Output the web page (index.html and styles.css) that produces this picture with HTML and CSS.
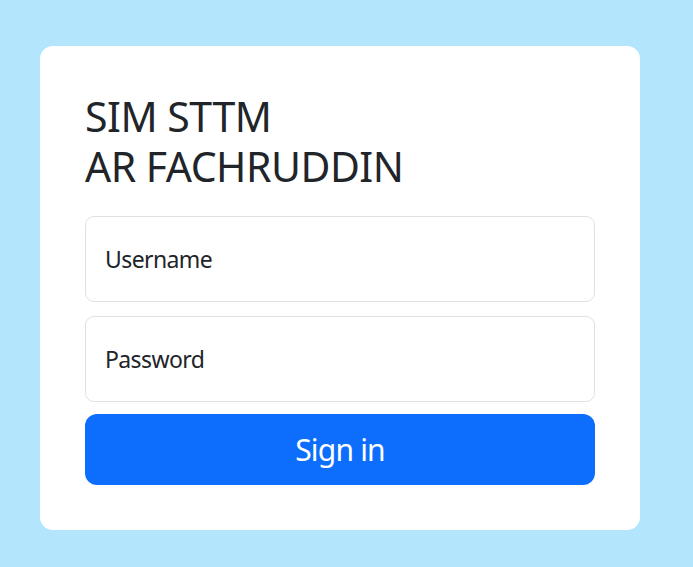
FILE: index.html
```html
<!DOCTYPE html>
<html lang="id">
<head>
<meta charset="utf-8">
<title>SIM STTM AR FACHRUDDIN</title>
<link rel="stylesheet" href="styles.css">
</head>
<body>
<main class="page">
  <form class="card">
    <h1 class="title">SIM STTM<br>AR FACHRUDDIN</h1>
    <div class="fields">
      <input class="field" type="text" placeholder="Username">
      <input class="field" type="password" placeholder="Password">
      <button class="btn" type="button">Sign in</button>
    </div>
  </form>
</main>
</body>
</html>
```

FILE: styles.css
```css
* { box-sizing: border-box; }
html, body { margin: 0; height: 100%; }
body {
  background: #b3e5fc;
  font-family: "Noto Sans", "Open Sans", sans-serif;
  color: #212529;
}
.page {
  padding: 46px 53px 37px 40px;
}
.card {
  width: 600px;
  background: #fff;
  border-radius: 13px;
  padding: 45px 45px 45px 45px;
}
.title {
  margin: 0 0 25px 0;
  font-weight: 400;
  font-size: 41px;
  line-height: 50px;
  letter-spacing: -0.5px;
}
.fields {
  display: flex;
  flex-direction: column;
  gap: 14px;
}
.field {
  height: 86px;
  width: 100%;
  border: 1px solid #dee2e6;
  border-radius: 9px;
  padding: 0 19px;
  font-family: inherit;
  font-size: 23px;
  letter-spacing: -0.6px;
  color: #212529;
  background: #fff;
  outline: none;
}
.field::placeholder { color: #212529; opacity: 1; }
.btn {
  height: 71px;
  width: 100%;
  border: none;
  border-radius: 12px;
  background: #0d6efd;
  color: #fff;
  font-family: inherit;
  font-size: 30px;
  letter-spacing: -0.8px;
  margin-top: -2px;
}
```
